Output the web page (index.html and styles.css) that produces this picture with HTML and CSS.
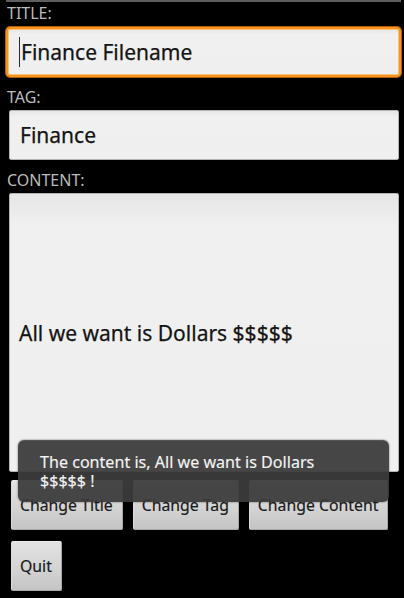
FILE: index.html
```html
<!DOCTYPE html>
<html>
<head>
<meta charset="utf-8">
<link rel="stylesheet" href="styles.css">
</head>
<body>
<div class="screen">
  <div class="topline"></div>
  <div class="label label-first">TITLE:</div>
  <div class="field field-focused"><span class="cursor"></span>Finance Filename</div>
  <div class="label">TAG:</div>
  <div class="field">Finance</div>
  <div class="label">CONTENT:</div>
  <div class="field field-content">All we want is Dollars $$$$$</div>
  <div class="btn-row">
    <div class="btn">Change Title</div>
    <div class="btn">Change Tag</div>
    <div class="btn">Change Content</div>
  </div>
  <div class="btn-row btn-row-second">
    <div class="btn">Quit</div>
  </div>
  <div class="toast">The content is, All we want is Dollars<br>$$$$$ !</div>
</div>
</body>
</html>
```
FILE: styles.css
```css
html, body {
  margin: 0;
  padding: 0;
  background: #000;
}
body {
  font-family: "Noto Sans", "DejaVu Sans", sans-serif;
  width: 404px;
  height: 598px;
  overflow: hidden;
}
.screen {
  position: relative;
  display: flex;
  flex-direction: column;
  height: 598px;
}
.topline {
  height: 2px;
  margin: 0 3px 0 6px;
  background: #5e5e5e;
}
.label {
  height: 20px;
  line-height: 20px;
  font-size: 16px;
  color: #bcbcbc;
  padding-left: 7px;
  margin-top: 10px;
  margin-bottom: 3px;
}
.label-first {
  margin-top: 1px;
  margin-bottom: 4px;
}
.field {
  display: flex;
  align-items: center;
  height: 50px;
  box-sizing: border-box;
  margin: 0 5px 0 9px;
  padding-left: 10px;
  background: linear-gradient(#e6e6e6, #f0f0f0 12%, #efefef);
  border: 1px solid #b4b4b4;
  border-radius: 2px;
  font-size: 21px;
  color: #141414;
  -webkit-text-stroke: 0.25px #141414;
}
.field-focused {
  margin: 0 3px 0 6px;
  padding-left: 11px;
  border: 2px solid #f7931e;
  border-radius: 4px;
  box-shadow: 0 0 0 1px #b35f0c, inset 0 0 0 1px #fbc27a;
}
.cursor {
  display: inline-block;
  width: 1px;
  height: 30px;
  background: #2a2a2a;
  margin-right: 1px;
}
.field-content {
  height: 279px;
  padding-left: 9px;
}
.btn-row {
  display: flex;
  gap: 10px;
  margin: 8px 0 0 11px;
}
.btn-row-second {
  margin-top: 11px;
}
.btn {
  height: 50px;
  box-sizing: border-box;
  padding: 0 9px 0 8px;
  display: flex;
  align-items: center;
  font-size: 15.8px;
  color: #1a1a1a;
  -webkit-text-stroke: 0.2px #1a1a1a;
  background: linear-gradient(#e2e2e2, #d4d4d4 55%, #c4c4c4);
  border: 1px solid #a8a8a8;
  border-top-color: #ececec;
  border-left-color: #dadada;
  border-radius: 2px;
}
.toast {
  position: absolute;
  left: 18px;
  top: 440px;
  width: 371px;
  height: 62px;
  box-sizing: border-box;
  padding: 13px 22px 0 22px;
  background: rgba(60, 60, 60, 0.94);
  border-radius: 6px;
  box-shadow: 0 0 2px rgba(0, 0, 0, 0.6), inset 0 1px 0 rgba(255, 255, 255, 0.08);
  color: #f4f4f4;
  font-size: 16.1px;
  line-height: 19px;
  -webkit-text-stroke: 0.15px #f4f4f4;
}
```
